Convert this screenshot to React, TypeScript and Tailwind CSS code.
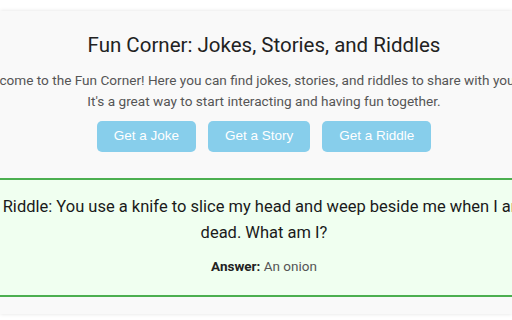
export default function App() {
  return (
    <div className="min-h-screen w-[512px] overflow-hidden bg-white pt-[11px] font-['Roboto',sans-serif]">
      <div className="bg-[#f9f9f9] pb-[17px] shadow-[0_0_4px_rgba(0,0,0,0.12)]">
        <div className="flex justify-center pl-4">
          <div className="w-[620px] shrink-0 px-5 pt-[20px] text-center">
            <h1 className="text-[20.5px] leading-[28px] text-[#222]">Fun Corner: Jokes, Stories, and Riddles</h1>
            <p className="mt-[11px] text-[13.6px] leading-[21px] text-[#555]">
              <span className="block whitespace-nowrap">Welcome to the Fun Corner! Here you can find jokes, stories, and riddles to share with your kids.</span>
              <span className="block whitespace-nowrap">It's a great way to start interacting and having fun together.</span>
            </p>
            <div className="mt-[9px] flex justify-center gap-3 font-['Liberation_Sans',Arial,sans-serif] text-[13.5px] text-white">
              <button className="h-[31px] rounded-[5px] bg-[#87ceeb] px-[17px]">Get a Joke</button>
              <button className="h-[31px] rounded-[5px] bg-[#87ceeb] px-[17px]">Get a Story</button>
              <button className="h-[31px] rounded-[5px] bg-[#87ceeb] px-[17px]">Get a Riddle</button>
            </div>
            <div className="mt-[26px] border-2 border-[#4caf50] bg-[#f0fff0] px-5 pt-[14px] pb-[19px]">
              <p className="text-[16.5px] leading-[26px] text-[#1a1a1a]">
                Riddle: You use a knife to slice my head and weep beside me when I am dead. What am I?
              </p>
              <p className="mt-[10px] text-[13.5px] leading-[20px] text-[#555]">
                <span className="font-bold text-[#222]">Answer:</span> An onion
              </p>
            </div>
          </div>
        </div>
      </div>
    </div>
  )
}
